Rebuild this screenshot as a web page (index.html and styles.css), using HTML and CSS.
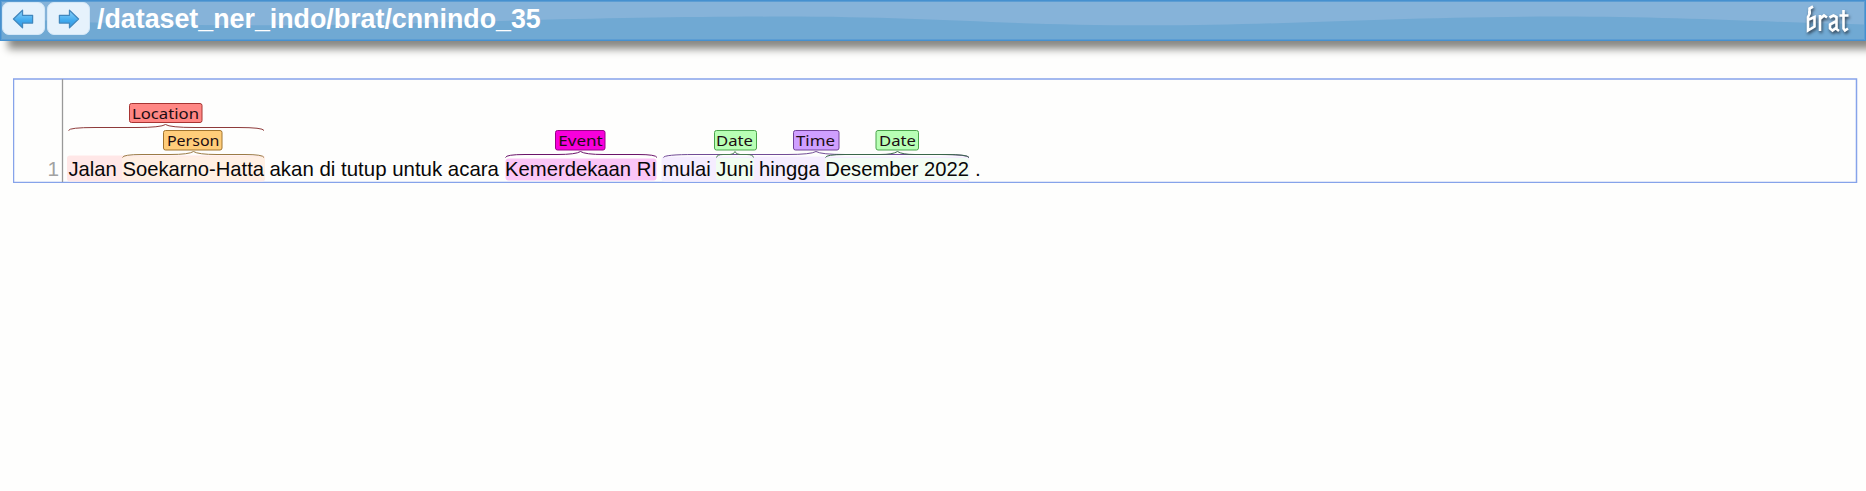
FILE: index.html
```html
<!DOCTYPE html>
<html lang="id">
<head>
<meta charset="utf-8">
<title>/dataset_ner_indo/brat/cnnindo_35</title>
<link rel="stylesheet" href="styles.css">
</head>
<body>
<svg width="0" height="0" class="defs">
  <defs>
    <linearGradient id="blue" x1="0" y1="0" x2="0" y2="1"><stop offset="0" stop-color="#8fd4fb"/><stop offset=".6" stop-color="#3fa9ee"/><stop offset="1" stop-color="#3898df"/></linearGradient>
    <symbol id="arrow" viewBox="0 0 24 22"><path d="M1.500 11 11 1.800V7.200h10.500v8H11v5z" fill="url(#blue)" stroke="#4187bd" stroke-width="1.300" stroke-linejoin="round"/></symbol>
  </defs>
</svg>
<header class="header">
  <svg class="wave" viewBox="0 0 1866 38" preserveAspectRatio="none"><path d="M0 16C100 24 250 26 400 22C550 18 660 15 780 15C930 15 1000 24 1150 24C1290 24 1390 15 1560 15C1680 15 1770 21 1866 23V38H0z"/></svg>
  <nav class="nav">
    <button class="nav-button" aria-label="Previous"><svg class="arrow"><use href="#arrow"/></svg></button>
    <button class="nav-button" aria-label="Next"><svg class="arrow next"><use href="#arrow"/></svg></button>
  </nav>
  <h1 class="title">/dataset_ner_indo/brat/cnnindo_35</h1>
  <svg class="logo" width="48" height="34" viewBox="0 0 48 34" role="img" aria-label="brat">
    <g fill="none" stroke="#fff" stroke-width="2.600" stroke-linejoin="miter">
      <path d="M12 3.500 8.500 5.500V11L7 14V27.500L13.500 23.500V14L8 16.500M7 9.500H10"/>
      <path d="M19 12V28M19 16 23 12.500 26 14.500"/>
      <path d="M28.500 14.500 32.500 12.500 35.500 14V26L38 28M35.500 18 29 21.500V25.500L31.500 27.500 35.500 24.500"/>
      <path d="M42.500 7V25.500L44 27.500 47 25.500M38.500 12.500H47.500"/>
    </g>
  </svg>
</header>
<main class="document">
  <svg class="annotations" width="1845" height="105" viewBox="13 78 1845 105">
    <rect class="frame" x="13.500" y="79" width="1843" height="103.500"/>
    <path class="gutter" d="M62.500 79V182"/>
    <g class="highlights">
      <rect x="67" y="155.500" width="198" height="26" rx="3" fill="#ffe7e7"/>
      <rect x="122" y="156.500" width="143" height="24" rx="3" fill="#fff0e4"/>
      <rect x="505.500" y="158.500" width="151" height="22" rx="3" fill="#fbc6f7"/>
      <rect x="661.500" y="156.500" width="308" height="25" rx="3" fill="#f5edff"/>
      <rect x="716" y="158" width="38" height="22" rx="3" fill="#f0fdf0"/>
      <rect x="825" y="158" width="144" height="22" rx="3" fill="#f2fdf4"/>
    </g>
    <g class="curves">
      <path stroke="#8e3b3b" d="M68.500 130.500Q69 127.500 95 127.500H136Q161 127.500 165.500 124.500Q170 127.500 195 127.500H238Q263 127.500 264 130.500"/>
      <path stroke="#9b7b45" d="M122.500 157.500Q123 154.500 142 154.500H170Q189 154.500 193.500 151.500Q198 154.500 217 154.500H245Q263 154.500 264 157.500"/>
      <path stroke="#6b146a" d="M505.500 157.500Q506 154.500 525 154.500H557Q576 154.500 580.500 151.500Q585 154.500 604 154.500H638Q656 154.500 657 157.500"/>
      <path stroke="#714b96" d="M663.500 157.500Q664 154.500 695 154.500H787Q811 154.500 816 151.500Q821 154.500 845 154.500H940Q968 154.500 969 157.500"/>
      <path stroke="#477b51" d="M716.500 157.500Q717 154.500 723 154.500H730Q734 154.500 735 151.500Q736 154.500 740 154.500H747Q753 154.500 753.500 157.500"/>
      <path stroke="#39664a" d="M825.500 157.500Q826 154.500 845 154.500H880Q893 154.500 897.500 151.500Q902 154.500 915 154.500H946Q968 154.500 969 157.500"/>
    </g>
    <g class="labels">
      <rect x="129.500" y="103.500" width="72.500" height="19" rx="2" fill="#ff8784" stroke="#a83432"/><text x="165.500" y="119" textLength="67" lengthAdjust="spacingAndGlyphs">Location</text>
      <rect x="163.500" y="130.500" width="58.500" height="19.500" rx="2" fill="#ffcd7a" stroke="#a1742e"/><text x="193.200" y="146" textLength="52.500" lengthAdjust="spacingAndGlyphs">Person</text>
      <rect x="555.500" y="130.500" width="49.500" height="19.500" rx="2" fill="#f800db" stroke="#970087"/><text x="580.500" y="146" textLength="44.500" lengthAdjust="spacingAndGlyphs">Event</text>
      <rect x="714.500" y="130.500" width="42" height="19.500" rx="2" fill="#b8ffb5" stroke="#4ba44c"/><text x="734.500" y="146" textLength="37" lengthAdjust="spacingAndGlyphs">Date</text>
      <rect x="793.500" y="130.500" width="45.500" height="19.500" rx="2" fill="#cf9fff" stroke="#704298"/><text x="815.500" y="146" textLength="39" lengthAdjust="spacingAndGlyphs">Time</text>
      <rect x="876" y="130.500" width="42.500" height="19.500" rx="2" fill="#b8ffb5" stroke="#4ba44c"/><text x="897.500" y="146" textLength="37" lengthAdjust="spacingAndGlyphs">Date</text>
    </g>
    <text class="line-number" x="59" y="175.500">1</text>
    <g class="sentence">
      <text x="68.500" y="175.500" textLength="195.500" lengthAdjust="spacingAndGlyphs">Jalan Soekarno-Hatta</text>
      <text x="269.500" y="175.500" textLength="229.500" lengthAdjust="spacingAndGlyphs">akan di tutup untuk acara</text>
      <text x="505" y="175.500" textLength="152" lengthAdjust="spacingAndGlyphs">Kemerdekaan RI</text>
      <text x="662.500" y="175.500" textLength="306.500" lengthAdjust="spacingAndGlyphs">mulai Juni hingga Desember 2022</text>
      <text x="975" y="175.500">.</text>
    </g>
  </svg>
</main>
</body>
</html>
```
FILE: styles.css
```css
* { box-sizing: border-box; }
body { margin: 0; background: #fefefd; font-family: "Liberation Sans", Arial, sans-serif; overflow: hidden; }
.defs { position: absolute; }
.header {
  position: relative; display: flex; align-items: flex-start; height: 41px;
  border: 1px solid #4590cf; background: #86b3d9;
  box-shadow: inset 0 0 0 1px #5c9dd3, 8px 8px 8px #888884;
}
.wave { position: absolute; left: 1px; top: 1px; width: calc(100% - 2px); height: calc(100% - 2px); fill: #70a9d3; }
.nav { position: relative; display: flex; gap: 2px; padding: 1px 0 0 1px; }
.nav-button {
  display: flex; align-items: center; justify-content: center;
  width: 43px; height: 33px; padding: 0;
  border: 1px solid #d3e7f7; border-radius: 7px; background: #e6f2fc;
}
.arrow { width: 23px; height: 22px; }
.next { transform: scaleX(-1); }
.title { position: relative; margin: 1px auto 0 7px; color: #fff; font-size: 26.8px; line-height: 34px; font-weight: bold; }
.logo { position: relative; margin: 2px 16px 0 0; filter: drop-shadow(1px 2px 1.5px #345); }
.document { padding: 37px 8px 0 13px; }
.annotations { display: block; font-size: 20.8px; }
.frame { fill: none; stroke: #86a3ea; stroke-width: 1.5; }
.gutter { stroke: #999; stroke-width: 1.3; }
.curves { fill: none; stroke-width: 1; }
.labels { font: 15px "Noto Sans", sans-serif; text-anchor: middle; }
.labels text { fill: #1c0d12; }
.line-number { fill: #a2a2a2; text-anchor: end; }
.sentence { fill: #080808; }
```
